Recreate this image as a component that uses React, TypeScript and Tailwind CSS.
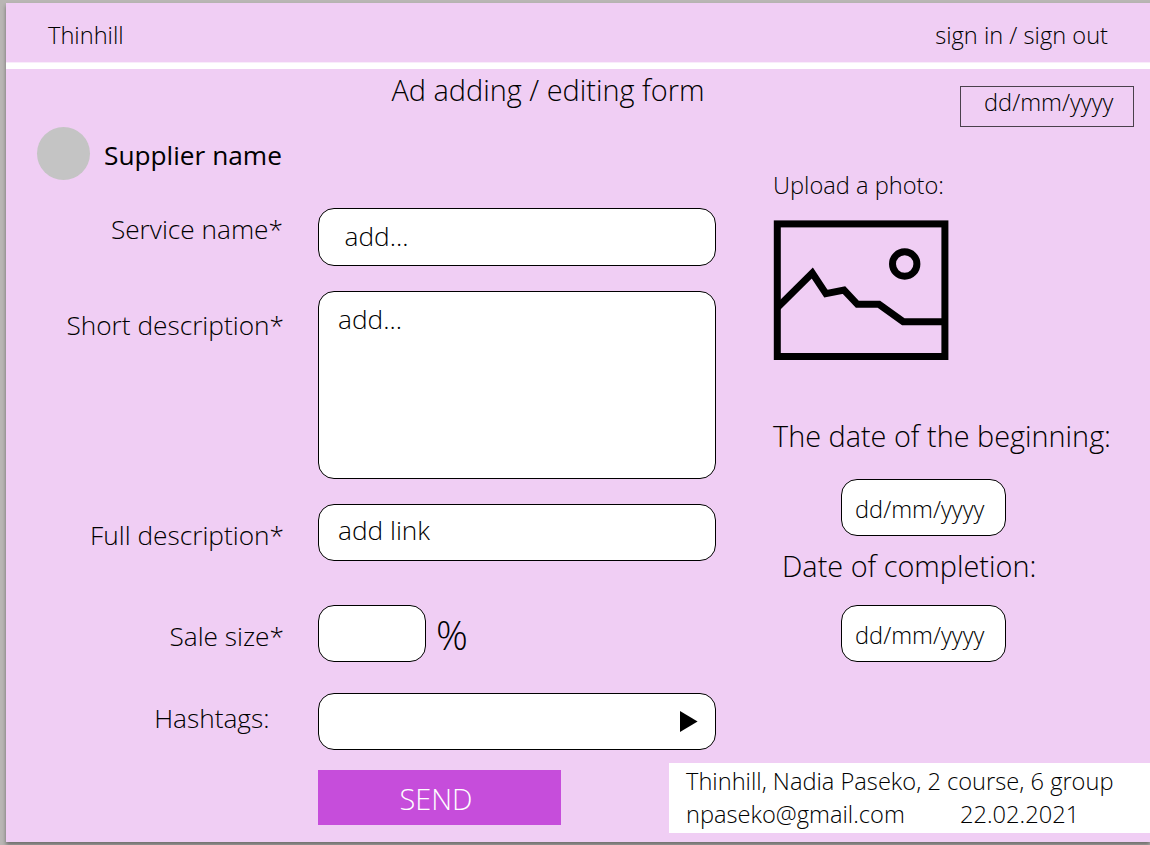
import type { ReactNode } from "react";

function Row({
  label,
  className,
  labelClass,
  children,
}: {
  label: string;
  className: string;
  labelClass: string;
  children: ReactNode;
}) {
  return (
    <div className={`flex items-start ${className}`}>
      <div className={`w-[312px] shrink-0 text-right text-[26.25px] leading-9 whitespace-nowrap ${labelClass}`}>
        {label}
      </div>
      {children}
    </div>
  );
}

const box = "rounded-[16px] border border-black bg-white text-[26.25px] leading-9 whitespace-nowrap";

function PhotoIcon() {
  return (
    <svg width="176" height="141" viewBox="773 220 176 141" fill="none" stroke="#000" strokeWidth="7">
      <rect x="777.3" y="223.9" width="167.6" height="132.6" />
      <path d="M777 308L812.3 273L825.9 293.7L844 290L857.4 304.3H879L903.2 321.7H945" />
      <circle cx="904.7" cy="264" r="12.2" />
    </svg>
  );
}

export default function App() {
  return (
    <div className="h-[845px] w-[1150px] overflow-hidden bg-[#b9b6b4] pt-[3px] pl-[6px] font-['Open_Sans',sans-serif] font-light text-black">
      <div className="flex h-[839px] w-[1144px] flex-col bg-[#f0cef4] shadow-[0_3px_4px_0px_rgba(0,0,0,0.4)]">
        <header className="flex h-[59px] shrink-0 items-start justify-between pt-[16px] pr-[42px] pl-[42px] text-[23.65px] leading-8 whitespace-nowrap">
          <div>Thinhill</div>
          <div>sign in / sign out</div>
        </header>
        <div className="h-[7px] shrink-0 border-t border-[#f9ecfb] bg-white" />

        <div className="flex h-[58px] shrink-0 items-start whitespace-nowrap">
          <h1 className="w-[569px] shrink-0 pt-[1px] pl-[385.5px] text-[28.9px] leading-10">Ad adding / editing form</h1>
          <div className="mt-[17px] ml-[385px] h-[41px] w-[174px] shrink-0 border border-[#4a414c] pl-[23px] text-[23.65px] leading-[31px]">
            dd/mm/yyyy
          </div>
        </div>

        <div className="flex h-[636px] shrink-0">
          <section className="w-[767px] shrink-0">
            <div className="flex h-[53px] items-start pl-[31px]">
              <div className="size-[53px] shrink-0 rounded-full bg-[#c4c4c4]" />
              <div className="pt-[10px] pl-[14px] text-[26.25px] leading-9 font-normal whitespace-nowrap">
                Supplier name
              </div>
            </div>
            <Row label="Service name*" className="mt-[28px] h-[58px]" labelClass="pt-[3px] pr-[35px]">
              <div className={`h-[58px] w-[398px] pt-[9px] pl-[25.5px] ${box}`}>add...</div>
            </Row>
            <Row label="Short description*" className="mt-[25px] h-[188px]" labelClass="pt-[16px] pr-[34px]">
              <div className={`h-[188px] w-[398px] pt-[9px] pl-[19px] ${box}`}>add...</div>
            </Row>
            <Row label="Full description*" className="mt-[25px] h-[57px]" labelClass="pt-[13px] pr-[34px]">
              <div className={`h-[57px] w-[398px] pt-[7px] pl-[19px] ${box}`}>add link</div>
            </Row>
            <Row label="Sale size*" className="mt-[44px] h-[57px]" labelClass="pt-[13px] pr-[34px]">
              <div className={`h-[57px] w-[108px] ${box}`} />
              <div className="pt-[2px] pl-[10px] text-[39.5px] leading-[56px]">%</div>
            </Row>
            <Row label="Hashtags:" className="mt-[31px] h-[57px]" labelClass="pt-[7px] pr-[48.5px]">
              <div className={`flex h-[57px] w-[398px] items-center justify-end pr-[17px] ${box}`}>
                <svg width="18" height="21" viewBox="0 0 18 21">
                  <path d="M0 0L17.6 10.5L0 21Z" fill="#000" />
                </svg>
              </div>
            </Row>
          </section>

          <section className="w-[377px] shrink-0 whitespace-nowrap">
            <div className="pt-[42px] text-[23.65px] leading-8">Upload a photo:</div>
            <div className="mt-[19px] h-[141px]">
              <PhotoIcon />
            </div>
            <div className="mt-[55px] text-[28.85px] leading-10">The date of the beginning:</div>
            <div className={`mt-[23px] ml-[68px] h-[57px] w-[165px] pt-[13px] pl-[13px] ${box}`}>
              <div className="text-[23.65px] leading-8">dd/mm/yyyy</div>
            </div>
            <div className="mt-[10px] pl-[9px] text-[28.85px] leading-10">Date of completion:</div>
            <div className={`mt-[19px] ml-[68px] h-[57px] w-[165px] pt-[13px] pl-[13px] ${box}`}>
              <div className="text-[23.65px] leading-8">dd/mm/yyyy</div>
            </div>
          </section>
        </div>

        <div className="flex shrink-0 items-start pl-[312px] whitespace-nowrap">
          <button className="mt-[7px] h-[55px] w-[243px] shrink-0 bg-[#c64ddb] pt-[3px] pr-[7px] text-[28.9px] leading-10 text-white">
            SEND
          </button>
          <footer className="ml-[108px] h-[70px] w-[481px] shrink-0 bg-white pt-[2px] pl-[17px] text-[23.65px] leading-[33px]">
            <div>Thinhill, Nadia Paseko, 2 course, 6 group</div>
            <div className="flex">
              <div className="w-[274px]">npaseko@gmail.com</div>
              <div>22.02.2021</div>
            </div>
          </footer>
        </div>
      </div>
    </div>
  );
}
